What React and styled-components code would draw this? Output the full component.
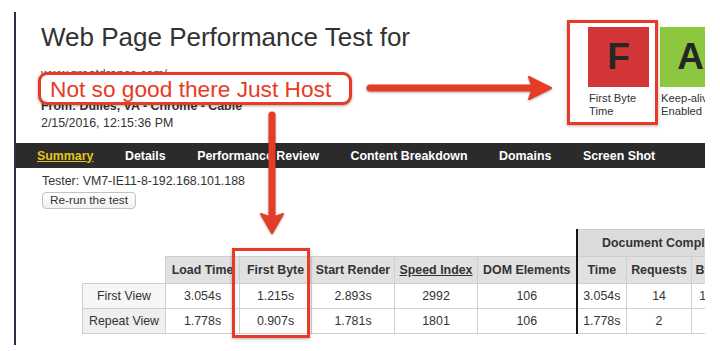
import React from "react";
import styled, { createGlobalStyle } from "styled-components";

const RED = "#e63b26";

const Global = createGlobalStyle`
  html, body { margin: 0; padding: 0; background: #fff; }
  body { font-family: "Liberation Sans", Arial, Helvetica, sans-serif; color: #333; }
`;

const Page = styled.div`
  position: relative;
  width: 720px;
  height: 351px;
  overflow: hidden;
  padding: 12px 0 0 14px;
  box-sizing: border-box;
`;

const Frame = styled.div`
  width: 691px;
  height: 333px;
  border-left: 2px solid #2d2c4a;
  box-sizing: border-box;
  overflow: hidden;
`;

const Header = styled.header`
  display: flex;
  height: 131px;
`;

const TitleBlock = styled.div`
  flex: 0 0 572px;
  box-sizing: border-box;
  padding: 10px 0 0 25px;
`;

const Title = styled.h1`
  margin: 0;
  font-size: 26px;
  font-weight: normal;
  line-height: 30px;
  color: #323232;
  white-space: nowrap;
`;

const Url = styled.div`
  margin-top: 14px;
  font-size: 12.4px;
  line-height: 16px;
  color: #555;
`;

const MetaGroup = styled.div`
  margin-top: 16px;
`;

const Meta = styled.div`
  font-size: 12.4px;
  line-height: 17px;
  font-weight: ${(p) => (p.$bold ? "bold" : "normal")};
  white-space: nowrap;
`;

const Grades = styled.div`
  display: flex;
  gap: 11px;
  padding-top: 15px;
  flex-shrink: 0;
`;

const Grade = styled.div`
  display: flex;
  flex-direction: column;
  width: 61px;
  flex-shrink: 0;
`;

const GradeBox = styled.div`
  height: 60px;
  background: ${(p) => p.$bg};
  display: flex;
  align-items: center;
  justify-content: center;
  font-size: 37px;
  font-weight: bold;
  color: #262626;
`;

const GradeLabel = styled.div`
  margin-top: 5px;
  padding-left: 1px;
  font-size: 11.2px;
  line-height: 13px;
  color: #333;
  white-space: nowrap;
`;

const Nav = styled.nav`
  display: flex;
  align-items: center;
  gap: 31.5px;
  height: 25px;
  padding-left: 21px;
  background: #2b2b2b;
`;

const NavLink = styled.span`
  font-size: 12.4px;
  font-weight: bold;
  color: ${(p) => (p.$active ? "#e4c41a" : "#fff")};
  text-decoration: ${(p) => (p.$active ? "underline" : "none")};
  white-space: nowrap;
`;

const Tester = styled.div`
  padding: 6px 0 0 26px;
  font-size: 12.4px;
  line-height: 15px;
`;

const Button = styled.button`
  display: block;
  margin-top: 3px;
  height: 17px;
  padding: 0 7px;
  border: 1px solid #c2c2c2;
  border-radius: 4px;
  background: linear-gradient(#ffffff, #f1f1f1);
  font-family: inherit;
  font-size: 11.8px;
  line-height: 15px;
  color: #333;
`;

const TableWrap = styled.div`
  margin: 20px 0 0 66px;
`;

const Table = styled.table`
  border-collapse: collapse;
  table-layout: fixed;
  width: 665px;
  font-size: 12.4px;
  color: #333;
`;

const Cell = styled.td`
  padding: 0;
  height: ${(p) => p.$h || 24}px;
  text-align: center;
  white-space: nowrap;
  overflow: hidden;
  border: ${(p) => (p.$blank ? "none" : "1px solid #cfcfcf")};
  border-left: ${(p) => (p.$thick ? "2px solid #151515" : undefined)};
  background: ${(p) => p.$bg || "transparent"};
  font-weight: ${(p) => (p.$head ? "bold" : "normal")};
  text-decoration: ${(p) => (p.$link ? "underline" : "none")};
`;

const Callout = styled.div`
  position: absolute;
  left: 38px;
  top: 72px;
  width: 314px;
  height: 33px;
  box-sizing: border-box;
  border: 3px solid ${RED};
  border-radius: 9px;
  background: #fff;
  box-shadow: 0 1px 3px rgba(0, 0, 0, 0.35);
  padding-left: 9px;
  font-size: 22.7px;
  line-height: 28px;
  color: ${RED};
  white-space: nowrap;
`;

const Outline = styled.div`
  position: absolute;
  left: ${(p) => p.$x}px;
  top: ${(p) => p.$y}px;
  width: ${(p) => p.$w}px;
  height: ${(p) => p.$h}px;
  box-sizing: border-box;
  border: 3px solid ${RED};
  box-shadow: 0 1px 3px rgba(0, 0, 0, 0.3);
`;

const ArrowSvg = styled.svg`
  position: absolute;
  left: ${(p) => p.$x}px;
  top: ${(p) => p.$y}px;
  overflow: visible;
  filter: drop-shadow(0 1px 1px rgba(0, 0, 0, 0.35));
`;

const cols = [83, 74, 72, 83, 83, 99, 50, 65, 56];

const heads = ["Load Time", "First Byte", "Start Render", "Speed Index", "DOM Elements"];

const rows = [
  { label: "First View", vals: ["3.054s", "1.215s", "2.893s", "2992", "106"], doc: ["3.054s", "14", "150 KB"], bg: "#f6f6f6" },
  { label: "Repeat View", vals: ["1.778s", "0.907s", "1.781s", "1801", "106"], doc: ["1.778s", "2", "3 KB"], bg: "#efefef" },
];

const navItems = ["Summary", "Details", "Performance Review", "Content Breakdown", "Domains", "Screen Shot"];

export default function App() {
  return (
    <Page>
      <Global />
      <Frame>
        <Header>
          <TitleBlock>
            <Title>Web Page Performance Test for</Title>
            <Url>www.greatdrapes.com/</Url>
            <MetaGroup>
              <Meta $bold>From: Dulles, VA - Chrome - Cable</Meta>
              <Meta>2/15/2016, 12:15:36 PM</Meta>
            </MetaGroup>
          </TitleBlock>
          <Grades>
            <Grade>
              <GradeBox $bg="#d23637">F</GradeBox>
              <GradeLabel>First Byte<br />Time</GradeLabel>
            </Grade>
            <Grade>
              <GradeBox $bg="#8dc63f">A</GradeBox>
              <GradeLabel>Keep-alive<br />Enabled</GradeLabel>
            </Grade>
          </Grades>
        </Header>
        <Nav>
          {navItems.map((n, i) => (
            <NavLink key={n} $active={i === 0}>{n}</NavLink>
          ))}
        </Nav>
        <Tester>
          Tester: VM7-IE11-8-192.168.101.188
          <Button>Re-run the test</Button>
        </Tester>
        <TableWrap>
          <Table>
            <colgroup>
              {cols.map((w, i) => (
                <col key={i} style={{ width: w }} />
              ))}
            </colgroup>
            <tbody>
              <tr>
                <Cell $blank colSpan={6} $h={26} />
                <Cell colSpan={3} $head $thick $bg="#dcdcdc" $h={26}>Document Complete</Cell>
              </tr>
              <tr>
                <Cell $blank $h={26} />
                {heads.map((h) => (
                  <Cell key={h} $head $bg="#e1e1e1" $link={h === "Speed Index"} $h={26}>{h}</Cell>
                ))}
                <Cell $head $thick $bg="#e1e1e1" $h={26}>Time</Cell>
                <Cell $head $bg="#e1e1e1" $h={26}>Requests</Cell>
                <Cell $head $bg="#e1e1e1" $h={26}>Bytes In</Cell>
              </tr>
              {rows.map((r) => (
                <tr key={r.label}>
                  <Cell $bg={r.bg}>{r.label}</Cell>
                  {r.vals.map((v, i) => (
                    <Cell key={i}>{v}</Cell>
                  ))}
                  <Cell $thick>{r.doc[0]}</Cell>
                  <Cell>{r.doc[1]}</Cell>
                  <Cell>{r.doc[2]}</Cell>
                </tr>
              ))}
            </tbody>
          </Table>
        </TableWrap>
      </Frame>

      <Callout>Not so good there Just Host</Callout>

      <ArrowSvg $x={365} $y={76} width="190" height="24" viewBox="0 0 190 24">
        <line x1="5" y1="12" x2="170" y2="12" stroke={RED} strokeWidth="7" strokeLinecap="round" />
        <path d="M164 1 L186 12 L164 23 L168 12 Z" fill={RED} stroke={RED} strokeWidth="2" strokeLinejoin="round" />
      </ArrowSvg>

      <ArrowSvg $x={260} $y={110} width="24" height="126" viewBox="0 0 24 126">
        <line x1="12" y1="5" x2="12" y2="110" stroke={RED} strokeWidth="7" strokeLinecap="round" />
        <path d="M1 104 L12 123 L23 104 L12 108 Z" fill={RED} stroke={RED} strokeWidth="2" strokeLinejoin="round" />
      </ArrowSvg>

      <Outline $x={567} $y={20} $w={91} $h={105} />
      <Outline $x={232} $y={248} $w={78} $h={90} />
    </Page>
  );
}
